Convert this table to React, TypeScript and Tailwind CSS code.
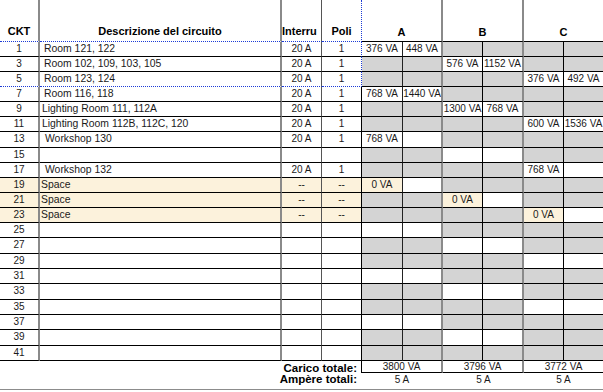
import React from 'react';

type Circuit = {
  ckt: number;
  desc?: string;
  indent?: string;
  amp?: string;
  poli?: string;
  load?: [string, string];
  space?: boolean;
};

const circuits: Circuit[] = [
  { ckt: 1, desc: 'Room 121, 122', indent: 'pl-[4px]', amp: '20 A', poli: '1', load: ['376 VA', '448 VA'] },
  { ckt: 3, desc: 'Room 102, 109, 103, 105', indent: 'pl-[4px]', amp: '20 A', poli: '1', load: ['576 VA', '1152 VA'] },
  { ckt: 5, desc: 'Room 123, 124', indent: 'pl-[4px]', amp: '20 A', poli: '1', load: ['376 VA', '492 VA'] },
  { ckt: 7, desc: 'Room 116, 118', indent: 'pl-[4px]', amp: '20 A', poli: '1', load: ['768 VA', '1440 VA'] },
  { ckt: 9, desc: 'Lighting Room 111, 112A', indent: 'pl-[2px]', amp: '20 A', poli: '1', load: ['1300 VA', '768 VA'] },
  { ckt: 11, desc: 'Lighting Room 112B, 112C, 120', indent: 'pl-[2px]', amp: '20 A', poli: '1', load: ['600 VA', '1536 VA'] },
  { ckt: 13, desc: 'Workshop 130', indent: 'pl-[5px]', amp: '20 A', poli: '1', load: ['768 VA', ''] },
  { ckt: 15 },
  { ckt: 17, desc: 'Workshop 132', indent: 'pl-[5px]', amp: '20 A', poli: '1', load: ['768 VA', ''] },
  { ckt: 19, desc: 'Space', indent: 'pl-[1px]', amp: '--', poli: '--', load: ['0 VA', ''], space: true },
  { ckt: 21, desc: 'Space', indent: 'pl-[1px]', amp: '--', poli: '--', load: ['0 VA', ''], space: true },
  { ckt: 23, desc: 'Space', indent: 'pl-[1px]', amp: '--', poli: '--', load: ['0 VA', ''], space: true },
  { ckt: 25 },
  { ckt: 27 },
  { ckt: 29 },
  { ckt: 31 },
  { ckt: 33 },
  { ckt: 35 },
  { ckt: 37 },
  { ckt: 39 },
  { ckt: 41 },
];

// width + right border of each phase sub-column (A1 A2 B1 B2 C1 C2)
const phaseCols = [
  ['w-[41px] border-r border-r-[#222]', 'w-[40px] border-r-2 border-r-[#8a8a8a]'],
  ['w-[40px] border-r border-r-black', 'w-[41px] border-r-2 border-r-[#8a8a8a]'],
  ['w-[40px] border-r border-r-black', 'w-[39px]'],
];

const cell = 'shrink-0 overflow-hidden whitespace-nowrap leading-[14px]';
const solidBottom = 'border-b border-b-black';
const dottedBottom = '[border-bottom:1px_dotted_#1c3bd6]';

function CircuitRow({ c, index }: { c: Circuit; index: number }) {
  const active = c.ckt === 41 ? -1 : index % 3;
  const selected = c.ckt <= 5;
  const leftBottom = c.ckt === 5 ? dottedBottom : solidBottom;
  const leftBg = c.space ? 'bg-[#fcf2dc]' : 'bg-white';
  const height = index < 12 ? 'h-[15.08px]' : 'h-[15.33px]';

  return (
    <div className={`flex ${height} text-[10px] text-[#1a1a1a]`}>
      <div className={`${cell} ${leftBottom} ${leftBg} w-[40px] border-r-2 border-r-[#8a8a8a] text-center`}>{c.ckt}</div>
      <div className={`${cell} ${leftBottom} ${leftBg} ${c.indent ?? ''} w-[242px] border-r-2 border-r-[#8a8a8a] text-[10.4px]`}>
        {c.desc}
      </div>
      <div className={`${cell} ${leftBottom} ${leftBg} w-[40px] border-r border-r-[#555] text-center`}>{c.amp}</div>
      <div
        className={`${cell} ${leftBottom} ${leftBg} w-[40px] text-center ${
          selected ? '[border-right:1px_dotted_#1c3bd6]' : 'border-r border-r-black'
        }`}
      >
        {c.poli}
      </div>
      {phaseCols.map((subs, p) =>
        subs.map((cls, s) => {
          const on = p === active;
          let bg = 'bg-[#d4d4d4]';
          if (on) bg = c.space && s === 0 ? 'bg-[#fcf2dc]' : 'bg-white';
          return (
            <div key={`${p}-${s}`} className={`${cell} ${solidBottom} ${bg} ${cls} text-center`}>
              {on && c.load ? c.load[s] : ''}
            </div>
          );
        })
      )}
    </div>
  );
}

export default function App() {
  return (
    <div className="w-[603px] h-[392px] bg-white overflow-hidden [font-family:'Liberation_Sans',Arial,sans-serif] text-black">
      {/* header */}
      <div className="flex h-[42px] text-[11px] font-bold">
        <div className={`shrink-0 w-[40px] border-r-2 border-r-[#8a8a8a] ${dottedBottom} flex items-end justify-center pb-[4px] leading-[12px]`}>
          CKT
        </div>
        <div className={`shrink-0 w-[242px] border-r-2 border-r-[#8a8a8a] ${dottedBottom} flex items-end justify-center pb-[4px] leading-[12px]`}>
          Descrizione del circuito
        </div>
        <div className={`shrink-0 w-[40px] border-r border-r-[#555] ${dottedBottom} flex items-end pb-[4px] leading-[12px] overflow-hidden whitespace-nowrap`}>
          Interru
        </div>
        <div className={`shrink-0 w-[40px] [border-right:1px_dotted_#1c3bd6] ${dottedBottom} flex items-end justify-center pb-[4px] leading-[12px]`}>
          Poli
        </div>
        <div className={`shrink-0 w-[81px] border-r-2 border-r-[#8a8a8a] ${solidBottom} flex items-end justify-center pb-[3px] leading-[12px]`}>
          A
        </div>
        <div className={`shrink-0 w-[81px] border-r-2 border-r-[#8a8a8a] ${solidBottom} flex items-end justify-center pb-[3px] leading-[12px]`}>
          B
        </div>
        <div className={`shrink-0 w-[79px] ${solidBottom} flex items-end justify-center pb-[3px] leading-[12px]`}>C</div>
      </div>

      {circuits.map((c, i) => (
        <CircuitRow key={c.ckt} c={c} index={i} />
      ))}

      {/* totals */}
      <div className="flex h-[12.5px]">
        <div className="shrink-0 w-[361px] pr-[4px] text-right text-[11.5px] font-bold leading-[14px]">Carico totale:</div>
        <div className="shrink-0 w-[82px] border-l border-l-black border-r-2 border-r-[#8a8a8a] border-b border-b-black text-center text-[10px] leading-[11px] text-[#1a1a1a]">
          3800 VA
        </div>
        <div className="shrink-0 w-[81px] border-r-2 border-r-[#8a8a8a] border-b border-b-black text-center text-[10px] leading-[11px] text-[#1a1a1a]">
          3796 VA
        </div>
        <div className="shrink-0 w-[79px] border-b border-b-black text-center text-[10px] leading-[11px] text-[#1a1a1a]">
          3772 VA
        </div>
      </div>
      <div className="flex h-[13px]">
        <div className="shrink-0 w-[361px] pr-[4px] text-right text-[11.5px] font-bold leading-[12px]">Ampère totali:</div>
        <div className="shrink-0 w-[82px] text-center text-[10px] leading-[14px] text-[#1a1a1a]">5 A</div>
        <div className="shrink-0 w-[81px] text-center text-[10px] leading-[14px] text-[#1a1a1a]">5 A</div>
        <div className="shrink-0 w-[79px] text-center text-[10px] leading-[14px] text-[#1a1a1a]">5 A</div>
      </div>
      <div className="h-[2.5px]" />
      <div className="h-px bg-[#8c8c8c]" />
    </div>
  );
}
